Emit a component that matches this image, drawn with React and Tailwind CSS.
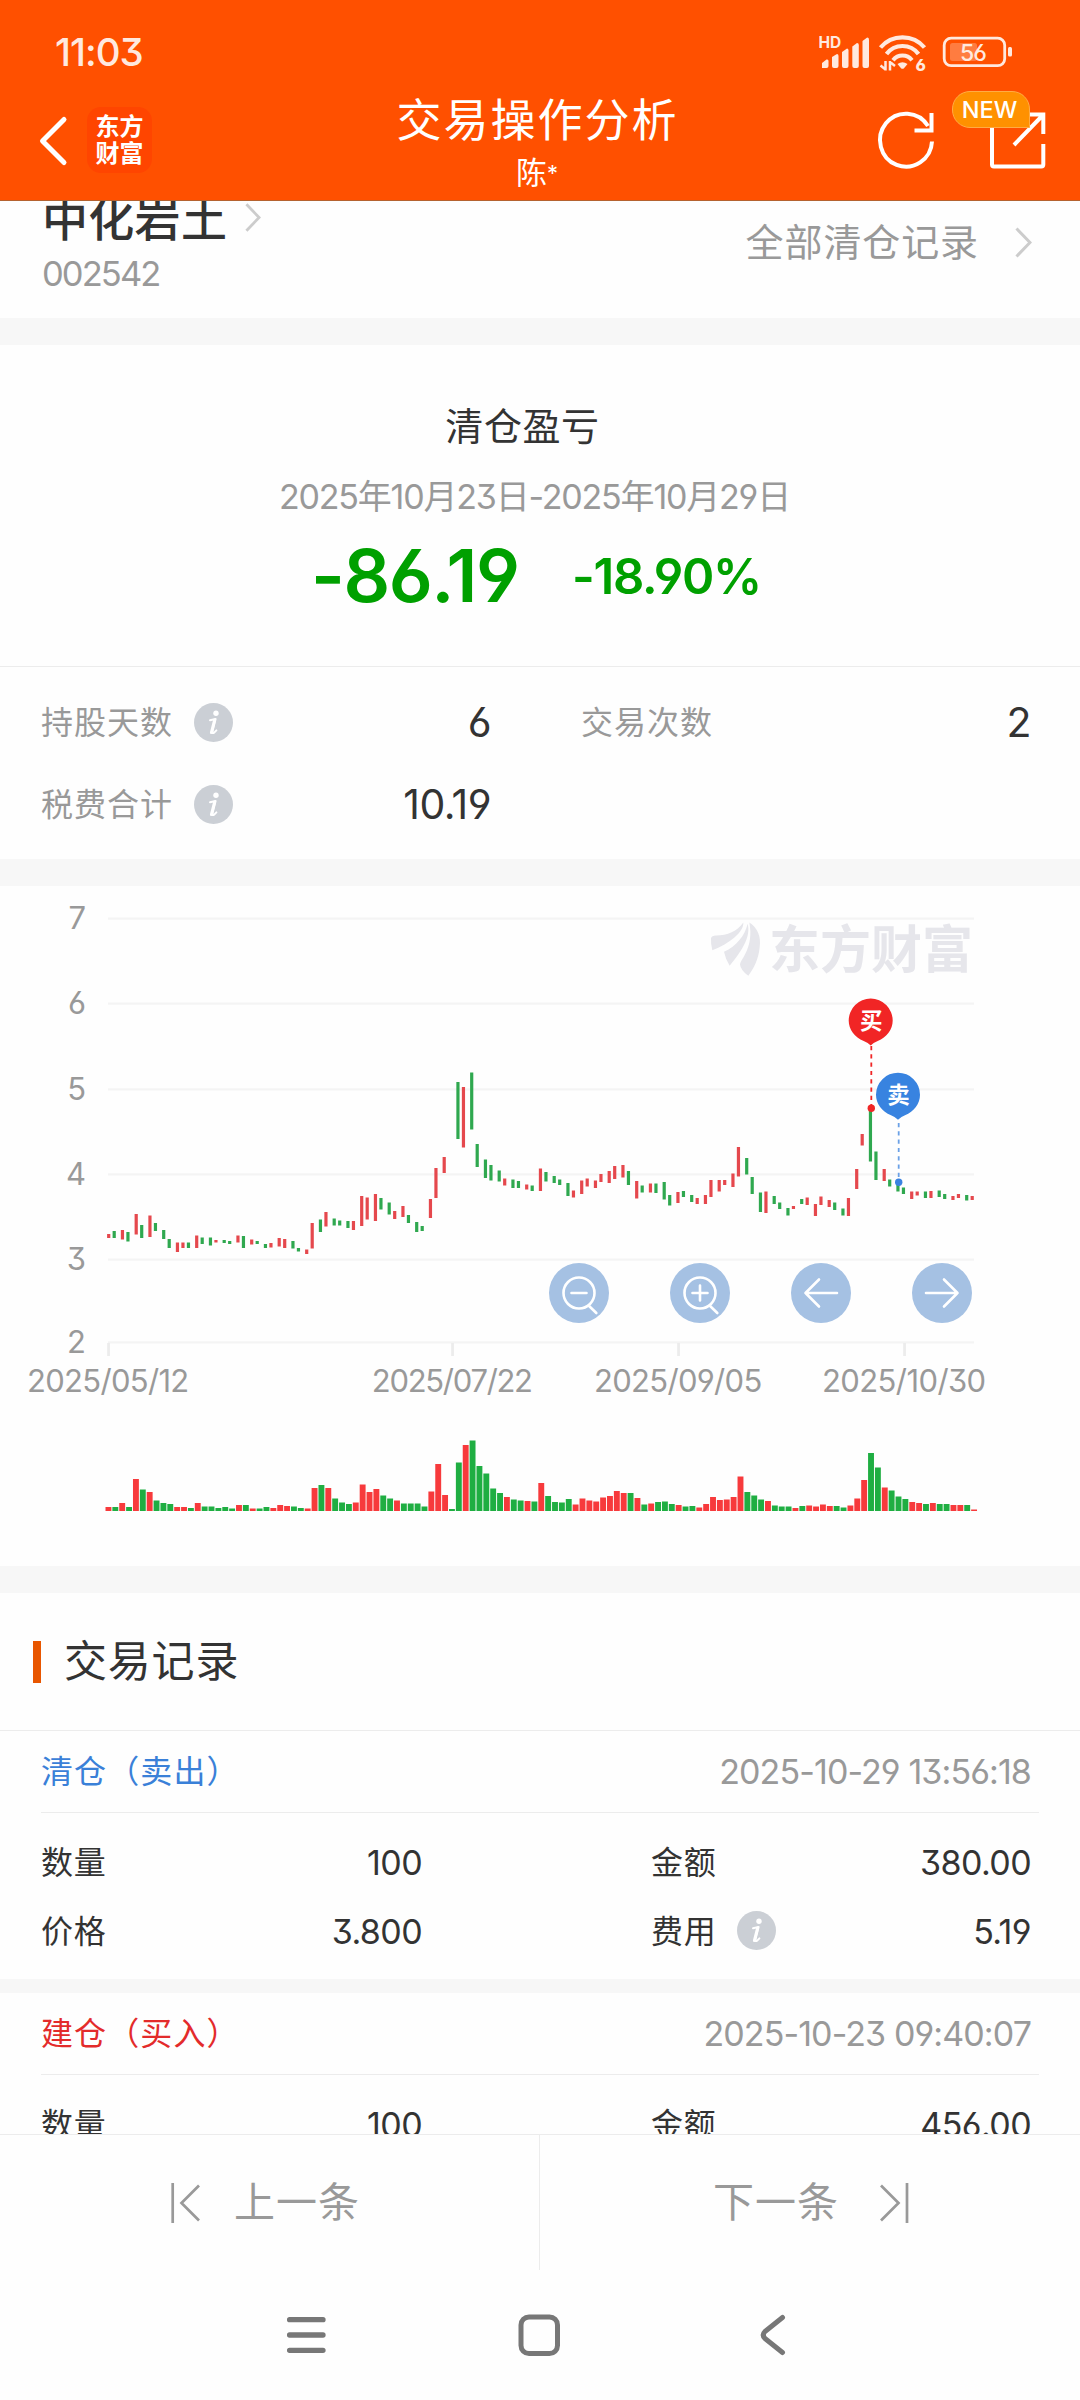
import React from 'react';

// K线数据:[涨跌, 最高点y, 最低点y],停牌为 null
const CANDLES = [
  ['r', 348, 352], ['g', 345, 352], ['r', 344, 353.5], ['g', 346, 355.5], ['r', 328, 348.5], ['g', 339, 352], ['r', 329.5, 351], ['g', 337, 345],
  ['g', 344, 353], ['g', 353, 362], ['r', 356.5, 366], ['r', 356.5, 362], ['g', 356.5, 362], ['r', 349.5, 362], ['g', 351.5, 358], ['g', 351.5, 359.5],
  ['r', 354, 356.5], ['g', 354, 357], ['g', 355, 358], ['r', 349.5, 356.5], ['g', 350, 362], ['r', 353.5, 358.5], ['g', 355, 358], ['g', 358, 362],
  ['r', 357, 361.5], ['r', 352, 360.5], ['r', 353, 362], ['g', 355, 362.5], ['g', 362, 365.5], ['r', 363.5, 368], ['r', 337, 362.5], ['g', 333.5, 346],
  ['r', 326, 340.5], ['g', 332.5, 339.5], ['g', 334.5, 339.5], ['g', 335, 342], ['r', 335, 344], ['r', 310, 340], ['r', 311.5, 333.5], ['r', 308, 335],
  ['g', 312, 323.5], ['g', 316.5, 328.5], ['r', 325, 333], ['r', 320, 331], ['g', 329, 337], ['g', 336, 346], ['g', 340, 345], ['r', 313, 332],
  ['r', 282, 312], ['r', 271, 287], null, ['g', 196, 253], ['r', 201, 261.5], ['g', 186.5, 243.5], ['g', 258, 281], ['g', 273.5, 292],
  ['g', 279, 294.5], ['g', 284.5, 295.5], ['r', 292.5, 299.5], ['g', 293.5, 302], ['g', 295, 302], ['r', 298.5, 303.5], ['g', 299.5, 305], ['r', 282.5, 305],
  ['g', 286, 295.5], ['g', 290, 297], ['g', 293.5, 299], ['g', 297, 310], ['r', 304.5, 311.5], ['r', 294.5, 308], ['r', 292.5, 300.5], ['r', 294.5, 302],
  ['r', 288, 296], ['r', 285, 297], ['r', 280, 293], ['r', 279, 291.5], ['g', 285, 299], ['r', 295, 312.5], ['g', 299.5, 306.5], ['r', 297.5, 306.5],
  ['g', 297.5, 307], ['g', 296, 313.5], ['g', 309, 319.5], ['r', 306, 317], ['g', 305, 311], ['g', 309, 316], ['r', 312, 318], ['r', 309, 318],
  ['r', 294, 311], ['r', 294, 305.5], ['r', 294, 299], ['r', 287.5, 301], ['r', 261, 290.5], ['g', 272, 288.5], ['g', 291, 308], ['g', 306.5, 326],
  ['r', 305.5, 327], ['g', 310, 318], ['g', 316.5, 323], ['g', 322, 329.5], ['r', 320, 323], ['g', 313, 318], ['r', 311.5, 319], ['r', 318, 330],
  ['r', 310.5, 319], ['r', 314, 321], ['g', 316.5, 324], ['g', 322.5, 329.5], ['r', 312, 330], ['r', 283, 303], ['r', 248, 259.5], ['g', 225, 275.5],
  ['g', 265.5, 294], ['r', 283, 295], ['g', 293.5, 300.5], ['g', 299, 305.5], ['g', 301.5, 308], ['r', 305.5, 313], ['r', 305.5, 309.5], ['g', 305.5, 312],
  ['r', 305, 312], ['g', 304.5, 311], ['g', 308, 313], ['r', 310, 314], ['r', 308, 312], ['g', 309, 314.5], ['r', 310, 314],
];

// 成交量,负数为绿柱
const VOLUMES = [
  4, -4, 8, -4, 32, -21.5, 19, -10.5, -8, -7, 4, 4, -3, 8, -4.5, -4.5, -3, -4, -2.5, 6, -6, 2.5, -2.5, -4,
  3, 6, 5, -4.5, -3, 2.5, 23, -26, 23, -12.5, -8.5, -7, 8.5, 26.5, 19, 22, -15.5, -12.5, 10.5, -7.5, -7.5, -7.5, -4.5, 19.5,
  47, 16, -2, -48.5, 66, -70.5, -45, -37.5, -22.5, -18, 14, -11.5, -10.5, 10, -9.5, 28, -15, -9, -8.5, -12, 6.5, 12.5, 10.5, 9.5,
  13.5, 15, 20, 18, -18, 13, -6.5, 7.5, -9, -9.5, -7, 6, -4.5, -5, 3.5, 7, 14, 11, 11.5, 14, 34.5, -19, -15.5, -11.5,
  10, -5.5, -4.5, -4.5, 3, -5, 5.5, 4.5, 6.5, 5, -5, -3.5, 5.5, 12.5, 31, -58, -43.5, 23.5, -20.5, -14.5, -12, 9, 8, -7,
  8, -7, -7, 6, 6, -6, 1.5,
];

const Y_AXIS = [
  { label: '7', y: 32.5 },
  { label: '6', y: 117.5 },
  { label: '5', y: 203.3 },
  { label: '4', y: 288.3 },
  { label: '3', y: 373.5 },
  { label: '2', y: 456.3 },
];

const X_AXIS = [
  { label: '2025/05/12', x: 108.5, spacing: -0.7 },
  { label: '2025/07/22', x: 452.5, spacing: -1.3 },
  { label: '2025/09/05', x: 678.5, spacing: -0.7 },
  { label: '2025/10/30', x: 904.5, spacing: -0.6 },
];

const candleX = i => 108.7 + 2.75 * Math.floor(i * 2.4963 + 0.04);

function InfoIcon() {
  return <svg className="w-[39px] h-[39px] shrink-0 -mt-[2px]" viewBox="0 0 39 39">
    <circle cx="19.5" cy="19.5" r="19.5" fill="#cbcfd5" />
    <circle cx="22" cy="10.3" r="2.7" fill="#fff" />
    <path d="M16 17.2 L21.6 16 L18.4 28.6 Q18 31 20.2 29.6 L22.4 27.4" fill="none" stroke="#fff" strokeWidth="2" strokeLinejoin="round" strokeLinecap="round" />
    <path d="M20.6 17 L17.4 29.5" stroke="#fff" strokeWidth="3" strokeLinecap="round" />
  </svg>;
}

function StatusBar() {
  return <div className="h-[102px] pl-[55px] pr-[67px] flex items-center justify-between">
    <span className="text-[38.5px] leading-none tracking-[-1px] font-medium text-[#ffe9df] pt-[3px]">11:03</span>
    <svg className="w-[194px] h-[42px] mb-[2px]" viewBox="0 0 194 42" fill="#ffe9df">
      <text x="-0.5" y="19" fontSize="15.5" fontWeight="700">HD</text>
      <path d="M3 39 V34 L7.5 30.5 Q9.5 30 9.5 32 V37 Q9.5 39 7.5 39 Z" />
      <path d="M13 37 V28 L18 25 Q19.5 25 19.5 27 V37 Q19.5 39 17.5 39 H15 Q13 39 13 37 Z" />
      <path d="M23 37 V23 L28 19.5 Q29.5 19.5 29.5 21.5 V37 Q29.5 39 27.5 39 H25 Q23 39 23 37 Z" />
      <path d="M33.3 37 V17.5 L38 14 Q39.8 14 39.8 16 V37 Q39.8 39 37.8 39 H35.3 Q33.3 39 33.3 37 Z" />
      <path d="M43.5 37 V12 L48.2 8.5 Q50 8.500 50 10.5 V37 Q50 39 48 39 H45.5 Q43.5 39 43.5 37 Z" />
      <g fill="none" stroke="#ffe9df">
        <path d="M61.500 18.500 A29 29 0 0 1 105.500 18.500" strokeWidth="4.2" />
        <path d="M67.500 25 A20 20 0 0 1 99.500 25" strokeWidth="4.2" />
        <path d="M74 31.200 A12 12 0 0 1 93 31.200" strokeWidth="4" />
      </g>
      <path d="M78.500 35 Q83.500 31.500 88.500 35 L85 39.200 Q83.500 40.500 82 39.200 Z" />
      <path d="M66.500 32 V41.500 M66.500 40.500 L61.500 36.500 M71 41.500 V32 M71 33 L76 37" stroke="#ffe9df" strokeWidth="2.5" />
      <text x="96.500" y="41.500" fontSize="16.500" fontWeight="800">6</text>
      <rect x="125.200" y="9.200" width="60.500" height="27.500" rx="7" fill="none" stroke="#ffe9df" strokeWidth="2.800" />
      <rect x="131" y="14" width="27" height="18" rx="2.500" fill="#fff" fillOpacity="0.250" />
      <rect x="189" y="18" width="4" height="9.500" rx="1.500" />
      <text x="141" y="31.500" fontSize="23" fontWeight="500" letterSpacing="-1">56</text>
    </svg>
  </div>;
}

function NavBar() {
  return <div className="h-[98px] relative flex justify-between">
    <div className="flex pl-[38px]">
      <svg className="w-[30px] h-[52px] mt-[13px]" viewBox="0 0 30 52">
        <path d="M26 4.500 L4.500 26 L26 47.500" fill="none" stroke="#fff" strokeWidth="5" strokeLinecap="round" strokeLinejoin="round" />
      </svg>
      <div className="ml-[19px] mt-[5px] w-[65px] h-[66px] rounded-[14px] bg-[#ff4500] text-white font-bold text-[24px] leading-[27px] pt-[6px] text-center">
        东方<br />财富
      </div>
    </div>
    <div className="absolute inset-x-0 top-0 flex flex-col items-center text-white pointer-events-none">
      <h1 className="text-[45px] leading-[50px] tracking-[2px] pr-[5px] -mt-[6px]">交易操作分析</h1>
      <p className="text-[31px] leading-[36px] pr-[6px] mt-[9px]">陈<span className="text-[22px] align-[3px]">*</span></p>
    </div>
    <svg className="w-[180px] h-[90px] mr-[30px]" viewBox="0 0 180 90" fill="none" stroke="#fff" strokeWidth="4">
      <path d="M62 39.500 A26 26.500 0 1 1 58 24" />
      <path d="M61.500 11 V28.500 H44.500" />
      <path d="M122 20 V62.500 Q122 64.500 124 64.500 H171.300 Q173.300 64.500 173.300 62.500 V42" />
      <path d="M158 12.500 H173.300 V32 M172 14 L144 43" />
    </svg>
    <div className="absolute right-[50px] -top-[11px] w-[78px] h-[37px] rounded-[18px] rounded-br-none bg-[#ff9100] border-[1.5px] border-[#ffab45] flex items-center justify-center text-white text-[23.5px] font-medium leading-none pr-[3px]">NEW</div>
  </div>;
}

function Chevron({ className }) {
  return <svg className={className} viewBox="0 0 17 31">
    <path d="M1.500 1.500 L15 15.500 L1.500 29.500" fill="none" stroke="#ccc" strokeWidth="3" />
  </svg>;
}

function StockRow() {
  return <div className="h-[117px] flex justify-between overflow-hidden pl-[42px] pr-[48px]">
    <div className="-mt-[10px]">
      <div className="flex items-center">
        <span className="text-[46px] leading-[56px] tracking-[0.3px] font-medium text-[#333]">中化岩土</span>
        <Chevron className="w-[16px] h-[31px] ml-[18px] -mt-[3px]" />
      </div>
      <div className="text-[34.5px] leading-[40px] tracking-[-1.9px] text-[#999] mt-[7px]">002542</div>
    </div>
    <div className="flex items-center h-[82px]">
      <span className="text-[38px] leading-none tracking-[0.9px] text-[#999]">全部清仓记录</span>
      <Chevron className="w-[17px] h-[31px] ml-[36px]" />
    </div>
  </div>;
}

function ProfitSummary() {
  return <div className="h-[322px] border-b border-[#ececec] pt-[57px]">
    <div className="text-center text-[38px] leading-[48px] tracking-[0.6px] text-[#333] pr-[35px]">清仓盈亏</div>
    <div className="text-center text-[34px] leading-[40px] tracking-[-1.2px] text-[#999] pr-[11px] mt-[27px]">2025年10月23日-2025年10月29日</div>
    <div className="flex items-center pl-[311px] mt-[14px] font-semibold text-[#00a000]">
      <span className="w-[261px] text-[73px] leading-[90px] tracking-[-1.5px]">-86.19</span>
      <span className="text-[49px] leading-[60px] tracking-[-1.3px] pt-[1px]">-18.90%</span>
    </div>
  </div>;
}

function Stat({ label, value, info }) {
  return <div className="flex items-center h-[82px] text-[32px]">
    <span className="tracking-[1px] text-[#999] mr-[21px]">{label}</span>
    {info && <InfoIcon />}
    <span className="ml-auto text-[41px] tracking-[-0.5px] text-[#333]">{value}</span>
  </div>;
}

function Stats() {
  return <div className="grid grid-cols-2 h-[192px] pt-[15px] content-start">
    <div className="pl-[41px] pr-[49px]"><Stat label="持股天数" value="6" info /></div>
    <div className="pl-[41px] pr-[49px]"><Stat label="交易次数" value="2" /></div>
    <div className="pl-[41px] pr-[49px]"><Stat label="税费合计" value="10.19" info /></div>
  </div>;
}

function ChartButton({ cx, children }) {
  return <g transform={`translate(${cx} 407)`} fill="none" stroke="#fff" strokeWidth="2.6" strokeLinecap="round" strokeLinejoin="round">
    <circle r="30" fill="#a5c1e3" stroke="none" />
    {children}
  </g>;
}

function Marker({ x, y, color, children }) {
  return <g transform={`translate(${x} ${y})`}>
    <path d="M-22 0 A22 22 0 1 1 22 0 C22 9 16 17 7 20.500 Q2 22.500 0 25 Q-2 22.500 -7 20.500 C-16 17 -22 9 -22 0 Z" fill={color} />
    <text x="0.500" y="8.300" textAnchor="middle" fontSize="22.500" fontWeight="700" fill="#fff">{children}</text>
  </g>;
}

function PriceChart() {
  return <svg className="block w-[1080px] h-[680px]" viewBox="0 0 1080 680">
    {Y_AXIS.map(({ label, y }) => <g key={label}>
      <rect x="108" y={y - 1} width="866" height="2.2" fill="#f4f4f4" />
      <text x="86" y={y + 10.6} textAnchor="end" fontSize="31" fill="#999">{label}</text>
    </g>)}
    {X_AXIS.map(({ label, x, spacing }) => <g key={label}>
      <rect x={x - 1.3} y="457" width="2.7" height="13" fill="#ececec" />
      <text x={x - 0.7} y="505.5" textAnchor="middle" fontSize="31" letterSpacing={spacing} fill="#999">{label}</text>
    </g>)}

    {/* 水印 */}
    <g fill="#e6e6eb">
      <g transform="translate(711 36) scale(0.3333 0.408) translate(-93 -78)">
        <path d="M93 118 Q95 111 108 111 C142 111 172 100 190 79 C192 103 146 132 97 147 Q92 132 93 118 Z" />
        <path d="M132 151 C170 136 194 112 203 82 C212 112 192 142 149 185 Q136 168 132 151 Z" />
        <path d="M208 79 C232 92 244 112 239 140 C235 172 222 190 205 210 Q182 196 180 182 C184 166 222 140 208 79 Z" />
      </g>
      <text x="769" y="81.5" fontSize="51" fontWeight="700">东方财富</text>
    </g>

    {CANDLES.map((c, i) => c && <rect key={i} x={candleX(i) - 1.6} y={c[1]} width="3.2" height={c[2] - c[1]} fill={c[0] === 'r' ? '#e5484d' : '#2fa84f'} />)}
    {VOLUMES.map((v, i) => <rect key={i} x={105.5 + i * 6.87} y={625 - Math.abs(v)} width="5.9" height={Math.abs(v)} fill={v > 0 ? '#f73a3c' : '#1fae42'} />)}

    <path d="M871.3 160 V219" stroke="#f02626" strokeWidth="1.8" strokeDasharray="4.2 4.1" />
    <path d="M898.7 237 V294" stroke="#6ba1e6" strokeWidth="1.8" strokeDasharray="4.2 4.1" />
    <circle cx="871.3" cy="222.3" r="3.7" fill="#f02626" />
    <circle cx="898.7" cy="296.3" r="3.7" fill="#3a82e0" />
    <Marker x="870.7" y="134.600" color="#f12525">买</Marker>
    <Marker x="898" y="208.700" color="#3883e0">卖</Marker>

    <ChartButton cx="579"><circle r="15.500" /><path d="M-7.500 0 H7.500 M9.800 12.800 L17.300 20" /></ChartButton>
    <ChartButton cx="700"><circle r="15.500" /><path d="M-7.500 0 H7.500 M0 -7.500 V7.500 M9.800 12.800 L17.300 20" /></ChartButton>
    <ChartButton cx="821"><path d="M16 0 H-15.500 M-2 -13.500 L-15.500 0 L-2 13.500" /></ChartButton>
    <ChartButton cx="942"><path d="M-16 0 H15.500 M2 -13.500 L15.500 0 L2 13.500" /></ChartButton>
  </svg>;
}

function Field({ label, value, info }) {
  return <div className="flex items-center h-[69px] text-[32px] text-[#333]">
    <span className="mr-[21px] tracking-[0.7px]">{label}</span>
    {info && <InfoIcon />}
    <span className="ml-auto text-[34px] tracking-[-0.6px]">{value}</span>
  </div>;
}

function TradeRecord({ title, titleClass, time, amount, price, total, fee }) {
  return <div>
    <div className="flex items-center justify-between h-[82px] mx-[41px] pr-[8px] border-b border-[#ececec]">
      <span className={`text-[32px] tracking-[1.1px] ${titleClass}`}>{title}</span>
      <span className="text-[34px] tracking-[-0.9px] text-[#999]">{time}</span>
    </div>
    <div className="flex h-[166px] pt-[15px] pl-[41px] pr-[49px]">
      <div className="w-[381px]">
        <Field label="数量" value={amount} />
        {price && <Field label="价格" value={price} />}
      </div>
      <div className="ml-auto w-[380px]">
        <Field label="金额" value={total} />
        {fee && <Field label="费用" value={fee} info />}
      </div>
    </div>
  </div>;
}

function Pager() {
  return <div className="h-[136px] shrink-0 grid grid-cols-2 border-t border-[#ececec] bg-[#fefefe] text-[41px] tracking-[1px] text-[#999]">
    <div className="flex items-center pl-[170px] border-r border-[#ececec]">
      <svg className="w-[30px] h-[40px]" viewBox="0 0 30 40" fill="none" stroke="#999" strokeWidth="2.7">
        <path d="M2.700 0 V40 M29 2.500 L11.500 20 L29 37.500" />
      </svg>
      <span className="ml-[34px]">上一条</span>
    </div>
    <div className="flex items-center pl-[173px]">
      <span>下一条</span>
      <svg className="w-[30px] h-[40px] ml-[41px]" viewBox="0 0 30 40" fill="none" stroke="#999" strokeWidth="2.7">
        <path d="M27 0 V40 M1 2.500 L18.500 20 L1 37.500" />
      </svg>
    </div>
  </div>;
}

function SystemNav() {
  return <div className="h-[130px] shrink-0 flex items-center pl-[286px] pr-[294px] justify-between bg-[#fefefe]">
    <svg className="w-[41px] h-[44px]" viewBox="0 0 41 44" stroke="#777" strokeWidth="5.3" strokeLinecap="round">
      <path d="M3.600 6.700 H37 M3.600 22 H37 M3.600 37.300 H37" />
    </svg>
    <svg className="w-[44px] h-[44px] -ml-[9px]" viewBox="0 0 44 44" fill="none" stroke="#777" strokeWidth="5">
      <rect x="4" y="4" width="36.500" height="36.500" rx="8" />
    </svg>
    <svg className="w-[26px] h-[44px]" viewBox="0 0 26 44" fill="none" stroke="#777" strokeWidth="5" strokeLinecap="round" strokeLinejoin="round">
      <path d="M22.500 4.500 L5 18.500 Q1.500 22 5 25.500 L22.500 39.500" />
    </svg>
  </div>;
}

export default function App() {
  return <div className="w-[1080px] h-[2400px] flex flex-col overflow-hidden bg-[#fefefe] font-['Inter','Noto_Sans_CJK_SC',sans-serif] [font-feature-settings:'cv03','cv04','cv09'] whitespace-nowrap">
    <header className="h-[201px] shrink-0 bg-[#ff5000] border-b border-[#b5622f]">
      <StatusBar />
      <NavBar />
    </header>
    <main className="flex-1 min-h-0 overflow-hidden">
      <StockRow />
      <div className="h-[27px] bg-[#f7f7f7]" />
      <ProfitSummary />
      <Stats />
      <div className="h-[27px] bg-[#f7f7f7]" />
      <PriceChart />
      <div className="h-[27px] bg-[#f7f7f7]" />
      <div className="h-[138px] flex items-center pl-[33px] border-b border-[#ececec]">
        <div className="w-[8px] h-[42px] bg-[#e85600] mr-[23px]" />
        <h2 className="text-[43px] leading-none tracking-[0.8px] text-[#333]">交易记录</h2>
      </div>
      <TradeRecord title="清仓（卖出）" titleClass="text-[#3a80d8]" time="2025-10-29 13:56:18" amount="100" price="3.800" total="380.00" fee="5.19" />
      <div className="h-[14px] bg-[#f7f7f7]" />
      <TradeRecord title="建仓（买入）" titleClass="text-[#e32b2b]" time="2025-10-23 09:40:07" amount="100" total="456.00" />
    </main>
    <Pager />
    <SystemNav />
  </div>;
}
